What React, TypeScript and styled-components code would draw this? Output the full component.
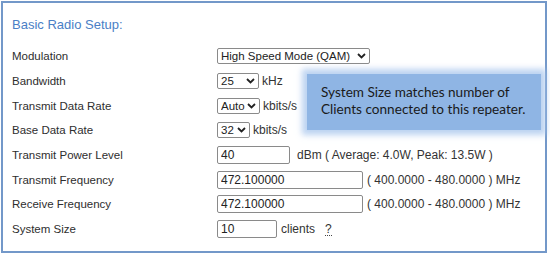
import * as React from "react";
import styled, { createGlobalStyle } from "styled-components";

const GlobalStyle = createGlobalStyle`
  html, body {
    margin: 0;
    padding: 0;
    background: #ffffff;
  }
  body {
    font-family: "Liberation Sans", Arial, sans-serif;
  }
`;

const Frame = styled.div`
  position: relative;
  box-sizing: border-box;
  margin: 1px;
  width: 546px;
  height: 252px;
  border: 2px solid #7398c9;
  padding: 14px 0 0 9px;
  color: #333;
`;

const Heading = styled.div`
  font-size: 13px;
  line-height: 16px;
  color: #4a80c6;
  margin-bottom: 11px;
`;

const Form = styled.div`
  display: grid;
  grid-template-columns: 205px 1fr;
  grid-auto-rows: 24.7px;
  align-items: center;
`;

const Label = styled.div`
  font-size: 11.5px;
  color: #2e2e2e;
`;

const Field = styled.div`
  display: flex;
  align-items: center;
  gap: 3px;
  font-size: 12px;
  color: #333;
`;

const SelectWrap = styled.div<{ $w: number }>`
  position: relative;
  width: ${(p) => p.$w}px;
  height: 16px;
`;

const Select = styled.select`
  appearance: none;
  box-sizing: border-box;
  width: 100%;
  height: 100%;
  margin: 0;
  padding: 0 14px 0 3px;
  border: 1px solid #8a8a8a;
  border-radius: 2px;
  background: #fff;
  font: 11.5px "Liberation Sans", Arial, sans-serif;
  color: #222;
  line-height: 14px;
`;

const Chevron = styled.svg`
  position: absolute;
  right: 4px;
  top: 4px;
  width: 9px;
  height: 8px;
  pointer-events: none;
`;

const Input = styled.input<{ $w: number }>`
  box-sizing: border-box;
  width: ${(p) => p.$w}px;
  height: 18px;
  margin: 0;
  padding: 0 3px;
  border: 1px solid #8a8a8a;
  border-radius: 2px;
  font: 12px "Liberation Sans", Arial, sans-serif;
  color: #222;
`;

const Unit = styled.span<{ $gap?: number }>`
  margin-left: ${(p) => p.$gap ?? 0}px;
`;

const Help = styled.span`
  margin-left: 7px;
  border-bottom: 1px dotted #444;
  line-height: 12px;
`;

const Callout = styled.div`
  position: absolute;
  left: 304px;
  top: 71px;
  width: 234px;
  height: 56px;
  box-sizing: border-box;
  padding: 10px 0 0 14px;
  background: #8fb5e4;
  box-shadow: 0 0 6px 5px rgba(165, 196, 236, 0.75);
  font-family: Lato, "Open Sans", sans-serif;
  font-size: 13.6px;
  line-height: 17px;
  color: #1a1a1a;
`;

const ChevronDown = () => (
  <Chevron viewBox="0 0 9 8">
    <path d="M1 2 L4.5 5.5 L8 2" fill="none" stroke="#222" strokeWidth="1.8" />
  </Chevron>
);

const Dropdown = ({ w, value }: { w: number; value: string }) => (
  <SelectWrap $w={w}>
    <Select defaultValue={value}>
      <option>{value}</option>
    </Select>
    <ChevronDown />
  </SelectWrap>
);

export default function App() {
  return (
    <>
      <GlobalStyle />
      <Frame>
        <Heading>Basic Radio Setup:</Heading>
        <Form>
          <Label>Modulation</Label>
          <Field>
            <Dropdown w={153} value="High Speed Mode (QAM)" />
          </Field>
          <Label>Bandwidth</Label>
          <Field>
            <Dropdown w={42} value="25" />
            <Unit>kHz</Unit>
          </Field>
          <Label>Transmit Data Rate</Label>
          <Field>
            <Dropdown w={43} value="Auto" />
            <Unit>kbits/s</Unit>
          </Field>
          <Label>Base Data Rate</Label>
          <Field>
            <Dropdown w={33} value="32" />
            <Unit>kbits/s</Unit>
          </Field>
          <Label>Transmit Power Level</Label>
          <Field>
            <Input $w={73} defaultValue="40" />
            <Unit $gap={4}>dBm ( Average: 4.0W, Peak: 13.5W )</Unit>
          </Field>
          <Label>Transmit Frequency</Label>
          <Field>
            <Input $w={146} defaultValue="472.100000" />
            <Unit $gap={1}>( 400.0000 - 480.0000 ) MHz</Unit>
          </Field>
          <Label>Receive Frequency</Label>
          <Field>
            <Input $w={146} defaultValue="472.100000" />
            <Unit $gap={1}>( 400.0000 - 480.0000 ) MHz</Unit>
          </Field>
          <Label>System Size</Label>
          <Field>
            <Input $w={60} defaultValue="10" />
            <Unit $gap={1}>clients</Unit>
            <Help>?</Help>
          </Field>
        </Form>
        <Callout>
          System Size matches number of
          <br />
          Clients connected to this repeater.
        </Callout>
      </Frame>
    </>
  );
}
